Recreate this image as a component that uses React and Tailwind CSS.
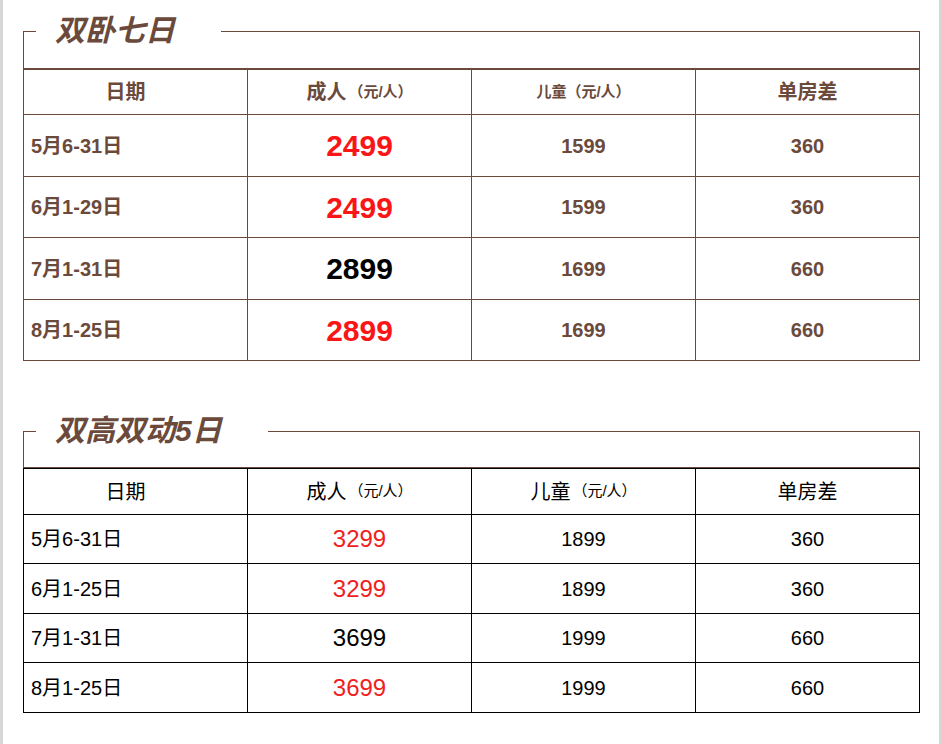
import React from "react";

const tableOne = [
  { date: "5月6-31日", adult: "2499", red: true, child: "1599", single: "360", h: "h-[62px]" },
  { date: "6月1-29日", adult: "2499", red: true, child: "1599", single: "360", h: "h-[61px]" },
  { date: "7月1-31日", adult: "2899", red: false, child: "1699", single: "660", h: "h-[62px]" },
  { date: "8月1-25日", adult: "2899", red: true, child: "1699", single: "660", h: "h-[61px]" },
];

const tableTwo = [
  { date: "5月6-31日", adult: "3299", red: true, child: "1899", single: "360", h: "h-[49px]" },
  { date: "6月1-25日", adult: "3299", red: true, child: "1899", single: "360", h: "h-[50px]" },
  { date: "7月1-31日", adult: "3699", red: false, child: "1999", single: "660", h: "h-[49px]" },
  { date: "8月1-25日", adult: "3699", red: true, child: "1999", single: "660", h: "h-[50px]" },
];

const font = { fontFamily: '"Liberation Sans", "Noto Sans CJK SC", sans-serif' };

function TitleBox({ title, boxH }) {
  return (
    <div>
      <div className="flex h-[30px]">
        <div className="w-[13px] mt-[15px] border-l border-t border-[#6b4a3c]" />
        <div className="pl-[19px] pr-[46px] text-[30px] leading-[30px] font-bold italic text-[#6b4a3c] whitespace-nowrap">
          {title}
        </div>
        <div className="flex-1 mt-[15px] border-t border-r border-[#6b4a3c]" />
      </div>
      <div className={`${boxH} border-x border-b border-[#6b4a3c]`} />
    </div>
  );
}

function BoldTable() {
  const cell = "flex items-center border-r border-b border-[#6b4a3c]";
  return (
    <div className="border-l border-t border-[#6b4a3c] text-[#6b4a3c] font-bold">
      <div className="grid grid-cols-4 h-[45px]">
        <div className={`${cell} justify-center pr-[20px] text-[20px]`}>日期</div>
        <div className={`${cell} justify-center text-[20px]`}>
          成人<span className="text-[15px] ml-[2px]">（元/人）</span>
        </div>
        <div className={`${cell} justify-center text-[15px]`}>儿童（元/人）</div>
        <div className={`${cell} justify-center text-[20px]`}>单房差</div>
      </div>
      {tableOne.map((r) => (
        <div key={r.date} className={`grid grid-cols-4 ${r.h}`}>
          <div className={`${cell} pl-[7px] text-[20px]`}>{r.date}</div>
          <div className={`${cell} justify-center text-[30px] ${r.red ? "text-[#fa1616]" : "text-black"}`}>
            {r.adult}
          </div>
          <div className={`${cell} justify-center text-[20px]`}>{r.child}</div>
          <div className={`${cell} justify-center text-[20px]`}>{r.single}</div>
        </div>
      ))}
    </div>
  );
}

function PlainTable() {
  const cell = "flex items-center border-r border-b border-black";
  return (
    <div className="border-l border-t border-black text-black">
      <div className="grid grid-cols-4 h-[46px]">
        <div className={`${cell} justify-center pr-[20px] text-[20px]`}>日期</div>
        <div className={`${cell} justify-center text-[20px]`}>
          成人<span className="text-[15px] ml-[2px]">（元/人）</span>
        </div>
        <div className={`${cell} justify-center text-[20px]`}>
          儿童<span className="text-[15px] ml-[2px]">（元/人）</span>
        </div>
        <div className={`${cell} justify-center text-[20px]`}>单房差</div>
      </div>
      {tableTwo.map((r) => (
        <div key={r.date} className={`grid grid-cols-4 ${r.h}`}>
          <div className={`${cell} pl-[7px] text-[20px]`}>{r.date}</div>
          <div className={`${cell} justify-center text-[24px] ${r.red ? "text-[#f01e1e]" : "text-black"}`}>
            {r.adult}
          </div>
          <div className={`${cell} justify-center text-[20px]`}>{r.child}</div>
          <div className={`${cell} justify-center text-[20px]`}>{r.single}</div>
        </div>
      ))}
    </div>
  );
}

export default function App() {
  return (
    <div className="w-[942px] h-[744px] bg-white border-x-[3px] border-[#d6d6d6] overflow-hidden" style={font}>
      <div className="w-[897px] ml-[20px] pt-[16px]">
        <TitleBox title="双卧七日" boxH="h-[23px]" />
        <BoldTable />
        <div className="mt-[55px]">
          <TitleBox title="双高双动5日" boxH="h-[22px]" />
          <PlainTable />
        </div>
      </div>
    </div>
  );
}
